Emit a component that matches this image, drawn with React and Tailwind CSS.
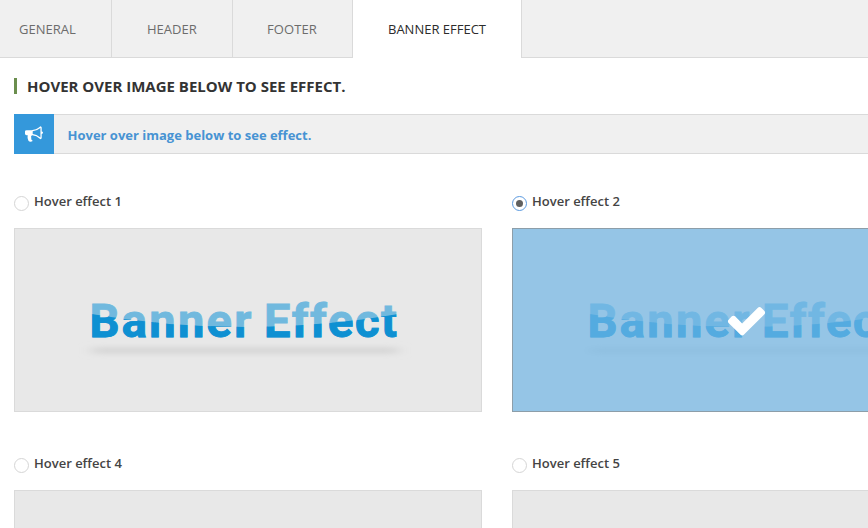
import React from "react";

const TABS = [
  { label: "GENERAL", cls: "w-[112px] pl-[19px] text-[#6c6c6c] border-b border-r" },
  { label: "HEADER", cls: "w-[121px] pl-[35px] text-[#6c6c6c] border-b border-r" },
  { label: "FOOTER", cls: "w-[120px] pl-[34px] tracking-[0.1px] text-[#6c6c6c] border-b border-r" },
  { label: "BANNER EFFECT", cls: "w-[169px] pl-[35px] text-[#2c2c2c] border-r bg-white" },
];

const EFFECTS = [
  { id: 1, selected: false, art: true },
  { id: 2, selected: true, art: true },
  { id: 4, selected: false, art: false },
  { id: 5, selected: false, art: false },
];

function Bullhorn() {
  return (
    <svg viewBox="0 0 1792 1792" className="size-[18px] fill-white">
      <path d="M1664 640q53 0 90.5 37.5t37.5 90.5-37.5 90.5-90.5 37.5v384q0 52-38 90t-90 38q-417-347-812-380-58 19-91 66t-31 100.5 40 92.5q-20 33-23 65.5t6 58 33.5 55 48 50 61.5 50.5q-29 58-111.5 83t-168.5 11.5-132-55.5q-7-23-29.5-87.5t-32-94.5-23-89-15-101 3.5-98.5 22-110.5h-122q-66 0-113-47t-47-113v-192q0-66 47-113t113-47h480q435 0 896-384 52 0 90 38t38 90v384zm-128 604v-954q-394 302-768 343v270q377 42 768 341z" />
    </svg>
  );
}

function Check() {
  return (
    <svg viewBox="0 0 1792 1792" className="size-[43px] fill-white">
      <path d="M1671 566q0 40-28 68l-724 724-136 136q-28 28-68 28t-68-28l-136-136-362-362q-28-28-28-68t28-68l136-136q28-28 68-28t68 28l294 295 656-657q28-28 68-28t68 28l136 136q28 28 28 68z" />
    </svg>
  );
}

function BannerWords({ color, clipPath }) {
  return (
    <g
      fill={color}
      stroke={color}
      strokeWidth="0.8"
      clipPath={clipPath}
      className="font-['Roboto',sans-serif] text-[47px] font-bold"
    >
      <text x="74.5" y="107.6" textLength="162">Banner</text>
      <text x="249" y="107.6" textLength="133">Effect</text>
    </g>
  );
}

function BannerArt({ id }) {
  const clip = `wave-${id}`;
  const blur = `shade-${id}`;
  return (
    <svg width="466" height="182" viewBox="0 0 466 182" className="block">
      <defs>
        <clipPath id={clip}>
          <path d="M70 84Q230 112 390 84V130H70Z" />
        </clipPath>
        <filter id={blur} x="-10%" y="-200%" width="120%" height="500%">
          <feGaussianBlur stdDeviation="7 2.8" />
        </filter>
      </defs>
      <rect x="77" y="118" width="306" height="7" fill="#d7d7d7" filter={`url(#${blur})`} />
      <BannerWords color="#71b9de" />
      <BannerWords color="#0e90d2" clipPath={`url(#${clip})`} />
    </svg>
  );
}

function EffectOption({ id, selected, art }) {
  return (
    <div className="h-[262px]">
      <div className="flex h-[36px] items-start">
        <span
          className={
            "mt-[4px] flex size-[15px] items-center justify-center rounded-full border bg-white " +
            (selected ? "border-[#5b9ae0]" : "border-[#d5d5d5]")
          }
        >
          {selected && <span className="size-[7px] rounded-full bg-[#606060]" />}
        </span>
        <span className="ml-[5px] text-[13px] leading-[18px] font-semibold text-[#444]">
          Hover effect {id}
        </span>
      </div>
      <div
        className={
          "relative h-[184px] w-[468px] border bg-[#e8e8e8] " +
          (selected ? "border-[#8d9ea9]" : "border-[#dadada]")
        }
      >
        {art && <BannerArt id={id} />}
        {selected && (
          <div className="absolute inset-0 flex items-center justify-center">
            <div className="absolute inset-0 bg-[#72b7e6]/70" />
            <div className="relative">
              <Check />
            </div>
          </div>
        )}
      </div>
    </div>
  );
}

export default function App() {
  return (
    <div className="h-[528px] w-[868px] overflow-hidden bg-white font-['Open_Sans',sans-serif]">
      <nav className="flex h-[58px] bg-[#f0f0f0]">
        {TABS.map((tab) => (
          <div
            key={tab.label}
            className={"shrink-0 border-[#dadada] text-[13px] leading-[58px] whitespace-nowrap " + tab.cls}
          >
            {tab.label}
          </div>
        ))}
        <div className="flex-1 border-b border-[#dadada]" />
      </nav>
      <main className="pl-[14px]">
        <h2 className="mt-[20px] h-[16px] border-l-3 border-[#6b8e4e] pl-[10px] text-[15px] leading-[17px] font-bold whitespace-nowrap text-[#333]">
          HOVER OVER IMAGE BELOW TO SEE EFFECT.
        </h2>
        <div className="mt-[20px] flex h-[40px]">
          <div className="flex w-[40px] items-center justify-center bg-[#3498db]">
            <Bullhorn />
          </div>
          <div className="flex-1 border-y border-[#dadada] bg-[#f0f0f0] pl-[13.5px] text-[13px] leading-[41px] font-bold text-[#4793d3]">
            Hover over image below to see effect.
          </div>
        </div>
        <div className="mt-[38px] grid w-[966px] grid-cols-2 gap-x-[30px]">
          {EFFECTS.map((effect) => (
            <EffectOption key={effect.id} {...effect} />
          ))}
        </div>
      </main>
    </div>
  );
}
